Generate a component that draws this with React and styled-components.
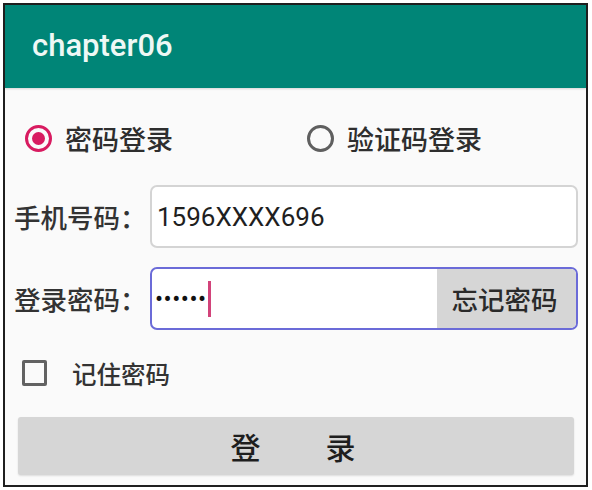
import React, { useState } from "react";
import styled, { createGlobalStyle } from "styled-components";

const GlobalStyle = createGlobalStyle`
  html, body {
    margin: 0;
    padding: 0;
    background: #ffffff;
  }
  * {
    box-sizing: border-box;
  }
`;

const cjk = `"Noto Sans CJK SC", "Noto Sans", sans-serif`;
const latin = `Roboto, "Noto Sans CJK SC", sans-serif`;

export default function App() {
  const [mode, setMode] = useState("password");
  const [remember, setRemember] = useState(false);

  return (
    <>
      <GlobalStyle />
      <Frame>
        <AppBar>
          <Title>chapter06</Title>
        </AppBar>
        <Body>
          <RadioRow>
            <RadioItem onClick={() => setMode("password")}>
              <RadioCircle checked={mode === "password"} />
              <RadioText>密码登录</RadioText>
            </RadioItem>
            <RadioItem onClick={() => setMode("code")}>
              <RadioCircle checked={mode === "code"} />
              <RadioText>验证码登录</RadioText>
            </RadioItem>
          </RadioRow>

          <FieldRow $top={21}>
            <Label>手机号码：</Label>
            <TextBox>
              <PhoneText>1596XXXX696</PhoneText>
            </TextBox>
          </FieldRow>

          <FieldRow $top={19}>
            <Label>登录密码：</Label>
            <PasswordBox>
              <PasswordInput>
                <Dots>••••••</Dots>
                <Caret />
              </PasswordInput>
              <ForgetButton>忘记密码</ForgetButton>
            </PasswordBox>
          </FieldRow>

          <CheckRow onClick={() => setRemember(!remember)}>
            <CheckBox checked={remember} />
            <CheckText>记住密码</CheckText>
          </CheckRow>

          <LoginButton>
            <span>登</span>
            <span>录</span>
          </LoginButton>
        </Body>
      </Frame>
    </>
  );
}

const Frame = styled.div`
  margin: 3px 0 0 3px;
  width: 585px;
  height: 484px;
  border: 2px solid #1e1e1e;
  display: flex;
  flex-direction: column;
  background: #fafafa;
  overflow: hidden;
`;

const AppBar = styled.div`
  height: 83px;
  flex-shrink: 0;
  background: #008577;
  display: flex;
  align-items: center;
  padding-left: 27px;
  box-shadow: 0 1px 2px rgba(0, 0, 0, 0.15);
`;

const Title = styled.div`
  font-family: ${latin};
  font-size: 31px;
  font-weight: 500;
  color: #eef8f5;
  margin-top: -2px;
`;

const Body = styled.div`
  display: flex;
  flex-direction: column;
  padding: 0 8px 0 9px;
`;

const RadioRow = styled.div`
  margin-top: 24px;
  height: 52px;
  display: flex;
  align-items: center;
`;

const RadioItem = styled.div`
  flex: 1;
  display: flex;
  align-items: center;
  gap: 13px;
  padding-left: 11px;
  cursor: pointer;
`;

const RadioCircle = styled.span`
  width: 27px;
  height: 27px;
  border-radius: 50%;
  border: 3px solid ${(p) => (p.checked ? "#d81b60" : "#5f5f5f")};
  display: flex;
  align-items: center;
  justify-content: center;
  flex-shrink: 0;
  &::after {
    content: "";
    width: 13px;
    height: 13px;
    border-radius: 50%;
    background: #d81b60;
    display: ${(p) => (p.checked ? "block" : "none")};
  }
`;

const RadioText = styled.span`
  font-family: ${cjk};
  font-size: 27px;
  font-weight: 500;
  color: #2e2e2e;
`;

const FieldRow = styled.div`
  margin-top: ${(p) => p.$top}px;
  height: 63px;
  display: flex;
  align-items: center;
`;

const Label = styled.div`
  width: 136px;
  font-family: ${cjk};
  font-size: 26.5px;
  font-weight: 500;
  color: #333333;
  white-space: nowrap;
`;

const TextBox = styled.div`
  flex: 1;
  height: 100%;
  border: 2px solid #d4d4d4;
  border-radius: 7px;
  background: #ffffff;
  display: flex;
  align-items: center;
  padding-left: 5px;
`;

const PhoneText = styled.span`
  font-family: ${latin};
  font-size: 26px;
  color: #1f1f1f;
`;

const PasswordBox = styled.div`
  flex: 1;
  height: 100%;
  border: 2px solid #6b6bd8;
  border-radius: 7px;
  background: #ffffff;
  display: flex;
  overflow: hidden;
`;

const PasswordInput = styled.div`
  flex: 1;
  display: flex;
  align-items: center;
  padding-left: 3px;
`;

const Dots = styled.span`
  font-family: ${latin};
  font-size: 24px;
  letter-spacing: 0.5px;
  color: #111111;
`;

const Caret = styled.span`
  width: 3px;
  height: 36px;
  margin-left: 1px;
  background: #d2437a;
`;

const ForgetButton = styled.div`
  width: 139px;
  background: #d6d6d6;
  display: flex;
  align-items: center;
  justify-content: center;
  font-family: ${cjk};
  font-size: 26.5px;
  font-weight: 500;
  color: #2a2a2a;
  padding-right: 4px;
`;

const CheckRow = styled.div`
  margin-top: 20px;
  height: 46px;
  display: flex;
  align-items: center;
  padding-left: 8px;
  gap: 25px;
  cursor: pointer;
`;

const CheckBox = styled.span`
  width: 25px;
  height: 26px;
  border: 3px solid ${(p) => (p.checked ? "#d81b60" : "#626262")};
  background: ${(p) => (p.checked ? "#d81b60" : "transparent")};
  border-radius: 2px;
  flex-shrink: 0;
`;

const CheckText = styled.span`
  font-family: ${cjk};
  font-size: 24.5px;
  font-weight: 500;
  color: #333333;
`;

const LoginButton = styled.div`
  margin: 21px 4px 0 4px;
  height: 58px;
  background: #d6d6d6;
  border-radius: 3px;
  box-shadow: 0 1px 2px rgba(0, 0, 0, 0.12);
  display: flex;
  align-items: center;
  justify-content: center;
  gap: 65px;
  font-family: ${cjk};
  font-size: 30px;
  font-weight: 500;
  color: #1e1e1e;
  padding-right: 6px;
`;
